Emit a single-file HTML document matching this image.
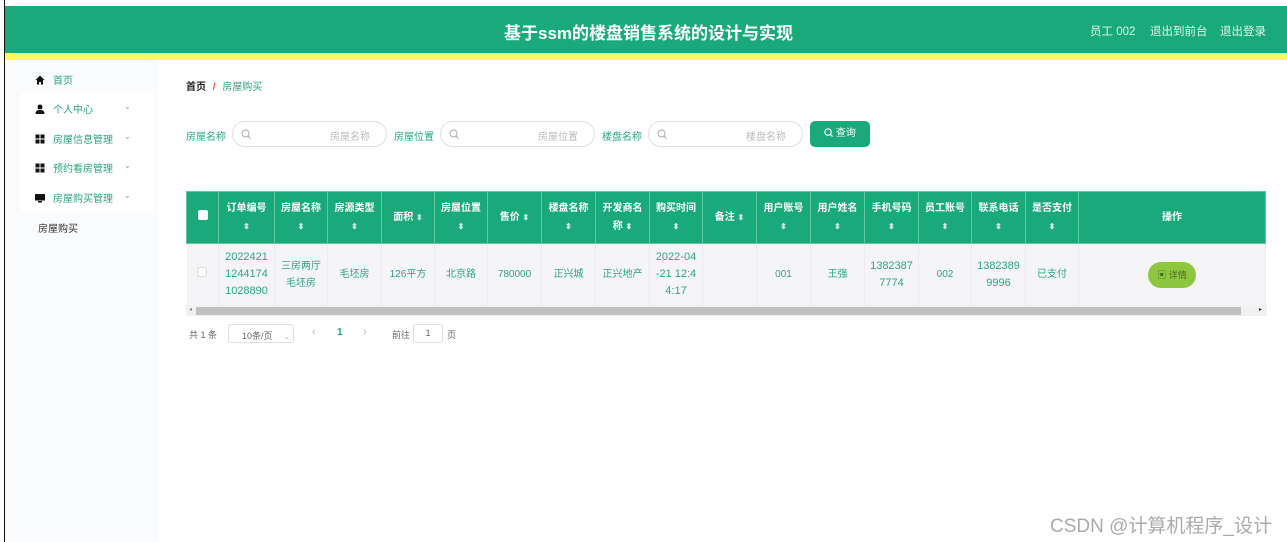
<!DOCTYPE html>
<html><head><meta charset="utf-8"><style>
*{margin:0;padding:0;box-sizing:border-box}
body{width:1287px;height:542px;overflow:hidden;background:#fff;font-family:"Liberation Sans","Noto Sans CJK SC",sans-serif;position:relative;color:#1aa97b}
.abs{position:absolute}
.vl{left:4px;top:0;width:1px;height:542px;background:#111}
.hdr{left:5px;top:6px;width:1282px;height:47px;background:#1aa97b}
.yel{left:5px;top:53px;width:1282px;height:7px;background:#fff85f}
.title{left:0;width:1297px;top:19px;text-align:center;color:#fff;font-weight:bold;font-size:17px}
.rl{top:23px;color:#dff5ea;font-size:11.5px}
.side{left:5px;top:60px;width:153px;height:482px;background:#fafbfd}
.mi{left:35px;font-size:10px;color:#2aa67f;display:flex;align-items:center}
.mi svg{margin-right:8px}
.chev{left:124px;font-size:8px;color:#999}
.lbl{font-size:10px;color:#2aa67f}
.inp{height:26px;width:155px;border:1px solid #dcdfe6;border-radius:13px;background:#fff;font-size:10px;color:#bbb}
.inp svg{position:absolute;left:8px;top:7px}
table{border-collapse:collapse;position:absolute;left:186px;top:191px;table-layout:fixed}
th{background:#1aa97b;color:#fff;font-size:10px;font-weight:bold;height:52px;border:1px solid #5fc9a4;line-height:18px;text-align:center}
td{background:#f5f5f7;height:62px;font-size:10px;color:#2aa67f;text-align:center;border-right:1px solid #ececf0;line-height:17px}
.s{font-size:8px;opacity:.8}
</style></head><body>
<div class="abs vl"></div>
<div class="abs hdr"></div>
<div class="abs yel"></div>
<div class="abs title">基于ssm的楼盘销售系统的设计与实现</div>
<div class="abs rl" style="left:1090px">员工 002</div>
<div class="abs rl" style="left:1150px">退出到前台</div>
<div class="abs rl" style="left:1220px">退出登录</div>
<div class="abs side"></div>
<div class="abs" style="left:20px;top:92px;width:135px;height:120px;background:#fff;border-radius:6px"></div>
<div class="abs mi" style="top:72px"><svg width="10" height="10" viewBox="0 0 10 10"><path d="M5 0.5L0.5 5H2V9.5H4V7H6V9.5H8V5H9.5Z" fill="#111"/></svg>首页</div>
<div class="abs mi" style="top:101px"><svg width="10" height="10" viewBox="0 0 10 10"><circle cx="5" cy="3" r="2.5" fill="#111"/><path d="M0.5 10C0.5 6.5 2.5 6 5 6S9.5 6.5 9.5 10Z" fill="#111"/></svg>个人中心</div>
<div class="abs mi" style="top:131px"><svg width="10" height="10" viewBox="0 0 10 10"><rect x="0.5" y="0.5" width="4" height="4" fill="#111"/><rect x="5.5" y="0.5" width="4" height="4" fill="#111"/><rect x="0.5" y="5.5" width="4" height="4" fill="#111"/><rect x="5.5" y="5.5" width="4" height="4" fill="#111"/></svg>房屋信息管理</div>
<div class="abs mi" style="top:160px"><svg width="10" height="10" viewBox="0 0 10 10"><rect x="0.5" y="0.5" width="4" height="4" fill="#111"/><rect x="5.5" y="0.5" width="4" height="4" fill="#111"/><rect x="0.5" y="5.5" width="4" height="4" fill="#111"/><rect x="5.5" y="5.5" width="4" height="4" fill="#111"/></svg>预约看房管理</div>
<div class="abs mi" style="top:190px"><svg width="10" height="10" viewBox="0 0 10 10"><rect x="0" y="1" width="10" height="6.5" fill="#111"/><rect x="3" y="8" width="4" height="1.5" fill="#111"/></svg>房屋购买管理</div>
<div class="abs chev" style="top:102px">⌄</div><div class="abs chev" style="top:132px">⌄</div><div class="abs chev" style="top:161px">⌄</div><div class="abs chev" style="top:191px">⌄</div>
<div class="abs" style="left:38px;top:220px;font-size:10px;color:#333">房屋购买</div>
<div class="abs" style="left:186px;top:78px;font-size:10px;color:#222;font-weight:bold">首页 <span style="color:#e85a3a;margin:0 4px">/</span> <span style="color:#2aa67f;font-weight:normal">房屋购买</span></div>
<div class="abs lbl" style="left:186px;top:128px">房屋名称</div>
<div class="abs inp" style="left:232px;top:121px"><svg width="10" height="10" viewBox="0 0 10 10"><circle cx="4.5" cy="4.5" r="3.5" fill="none" stroke="#aaa"/><path d="M7 7L9.5 9.5" stroke="#aaa"/></svg><span class="abs" style="left:97px;top:6px">房屋名称</span></div>
<div class="abs lbl" style="left:394px;top:128px">房屋位置</div>
<div class="abs inp" style="left:440px;top:121px"><svg width="10" height="10" viewBox="0 0 10 10"><circle cx="4.5" cy="4.5" r="3.5" fill="none" stroke="#aaa"/><path d="M7 7L9.5 9.5" stroke="#aaa"/></svg><span class="abs" style="left:97px;top:6px">房屋位置</span></div>
<div class="abs lbl" style="left:602px;top:128px">楼盘名称</div>
<div class="abs inp" style="left:648px;top:121px"><svg width="10" height="10" viewBox="0 0 10 10"><circle cx="4.5" cy="4.5" r="3.5" fill="none" stroke="#aaa"/><path d="M7 7L9.5 9.5" stroke="#aaa"/></svg><span class="abs" style="left:97px;top:6px">楼盘名称</span></div>
<div class="abs" style="left:810px;top:121px;width:60px;height:26px;background:#1aa97b;border-radius:5px;color:#fff;font-size:10px;line-height:26px;text-align:center"><svg width="9" height="9" viewBox="0 0 10 10" style="vertical-align:-1px"><circle cx="4.5" cy="4.5" r="3.5" fill="none" stroke="#fff" stroke-width="1.3"/><path d="M7 7L9.5 9.5" stroke="#fff" stroke-width="1.3"/></svg> 查询</div>
<table>
<colgroup><col style="width:32px"><col style="width:56px"><col style="width:53px"><col style="width:54px"><col style="width:53px"><col style="width:53px"><col style="width:54px"><col style="width:54px"><col style="width:54px"><col style="width:53px"><col style="width:54px"><col style="width:54px"><col style="width:54px"><col style="width:54px"><col style="width:53px"><col style="width:54px"><col style="width:53px"><col style="width:187px"></colgroup>
<tr><th><span style="display:inline-block;width:10px;height:10px;background:#fff;border-radius:2px"></span></th><th>订单编号<br><span class="s">⬍</span></th><th>房屋名称<br><span class="s">⬍</span></th><th>房源类型<br><span class="s">⬍</span></th><th>面积 <span class="s">⬍</span></th><th>房屋位置<br><span class="s">⬍</span></th><th>售价 <span class="s">⬍</span></th><th>楼盘名称<br><span class="s">⬍</span></th><th>开发商名<br>称 <span class="s">⬍</span></th><th>购买时间<br><span class="s">⬍</span></th><th>备注 <span class="s">⬍</span></th><th>用户账号<br><span class="s">⬍</span></th><th>用户姓名<br><span class="s">⬍</span></th><th>手机号码<br><span class="s">⬍</span></th><th>员工账号<br><span class="s">⬍</span></th><th>联系电话<br><span class="s">⬍</span></th><th>是否支付<br><span class="s">⬍</span></th><th>操作</th></tr>
<tr><td><span style="display:inline-block;width:10px;height:10px;background:#fff;border:1px solid #ddd;border-radius:2px"></span></td><td style="font-size:11px">2022421<br>1244174<br>1028890</td><td>三房两厅<br>毛坯房</td><td>毛坯房</td><td>126平方</td><td>北京路</td><td>780000</td><td>正兴城</td><td>正兴地产</td><td style="font-size:11px">2022-04<br>-21 12:4<br>4:17</td><td></td><td>001</td><td>王强</td><td style="font-size:11px">1382387<br>7774</td><td>002</td><td style="font-size:11px">1382389<br>9996</td><td>已支付</td><td><span style="display:inline-block;width:48px;height:26px;line-height:26px;border-radius:13px;background:#8dc63f;color:#4a6a20;font-size:9px">▣ 详情</span></td></tr>
</table>
<div class="abs" style="left:186px;top:305px;width:1081px;height:11px;background:#f1f1f1"></div>
<div class="abs" style="left:196px;top:307px;width:1045px;height:8px;background:#c1c1c1"></div>
<div class="abs" style="left:189px;top:306px;font-size:6px;color:#888">◂</div>
<div class="abs" style="left:1259px;top:306px;font-size:6px;color:#333">▸</div>
<div class="abs" style="left:189px;top:328px;font-size:9px;color:#666">共 1 条</div>
<div class="abs" style="left:228px;top:324px;width:66px;height:19px;border:1px solid #dcdfe6;border-radius:3px;font-size:9px;color:#666;padding:4px 0 0 13px">10条/页 <span style="color:#bbb;margin-left:8px">⌄</span></div>
<div class="abs" style="left:312px;top:326px;font-size:11px;color:#bbb">‹</div>
<div class="abs" style="left:337px;top:327px;font-size:10px;color:#1aa97b;font-weight:bold">1</div>
<div class="abs" style="left:363px;top:326px;font-size:11px;color:#bbb">›</div>
<div class="abs" style="left:392px;top:328px;font-size:9px;color:#666">前往</div>
<div class="abs" style="left:413px;top:324px;width:30px;height:19px;border:1px solid #dcdfe6;border-radius:3px;font-size:9px;color:#666;text-align:center;line-height:17px">1</div>
<div class="abs" style="left:447px;top:328px;font-size:9px;color:#666">页</div>
<div class="abs" style="left:1050px;top:511px;font-size:19px;color:#aaa;white-space:nowrap">CSDN @计算机程序_设计</div>
</body></html>
